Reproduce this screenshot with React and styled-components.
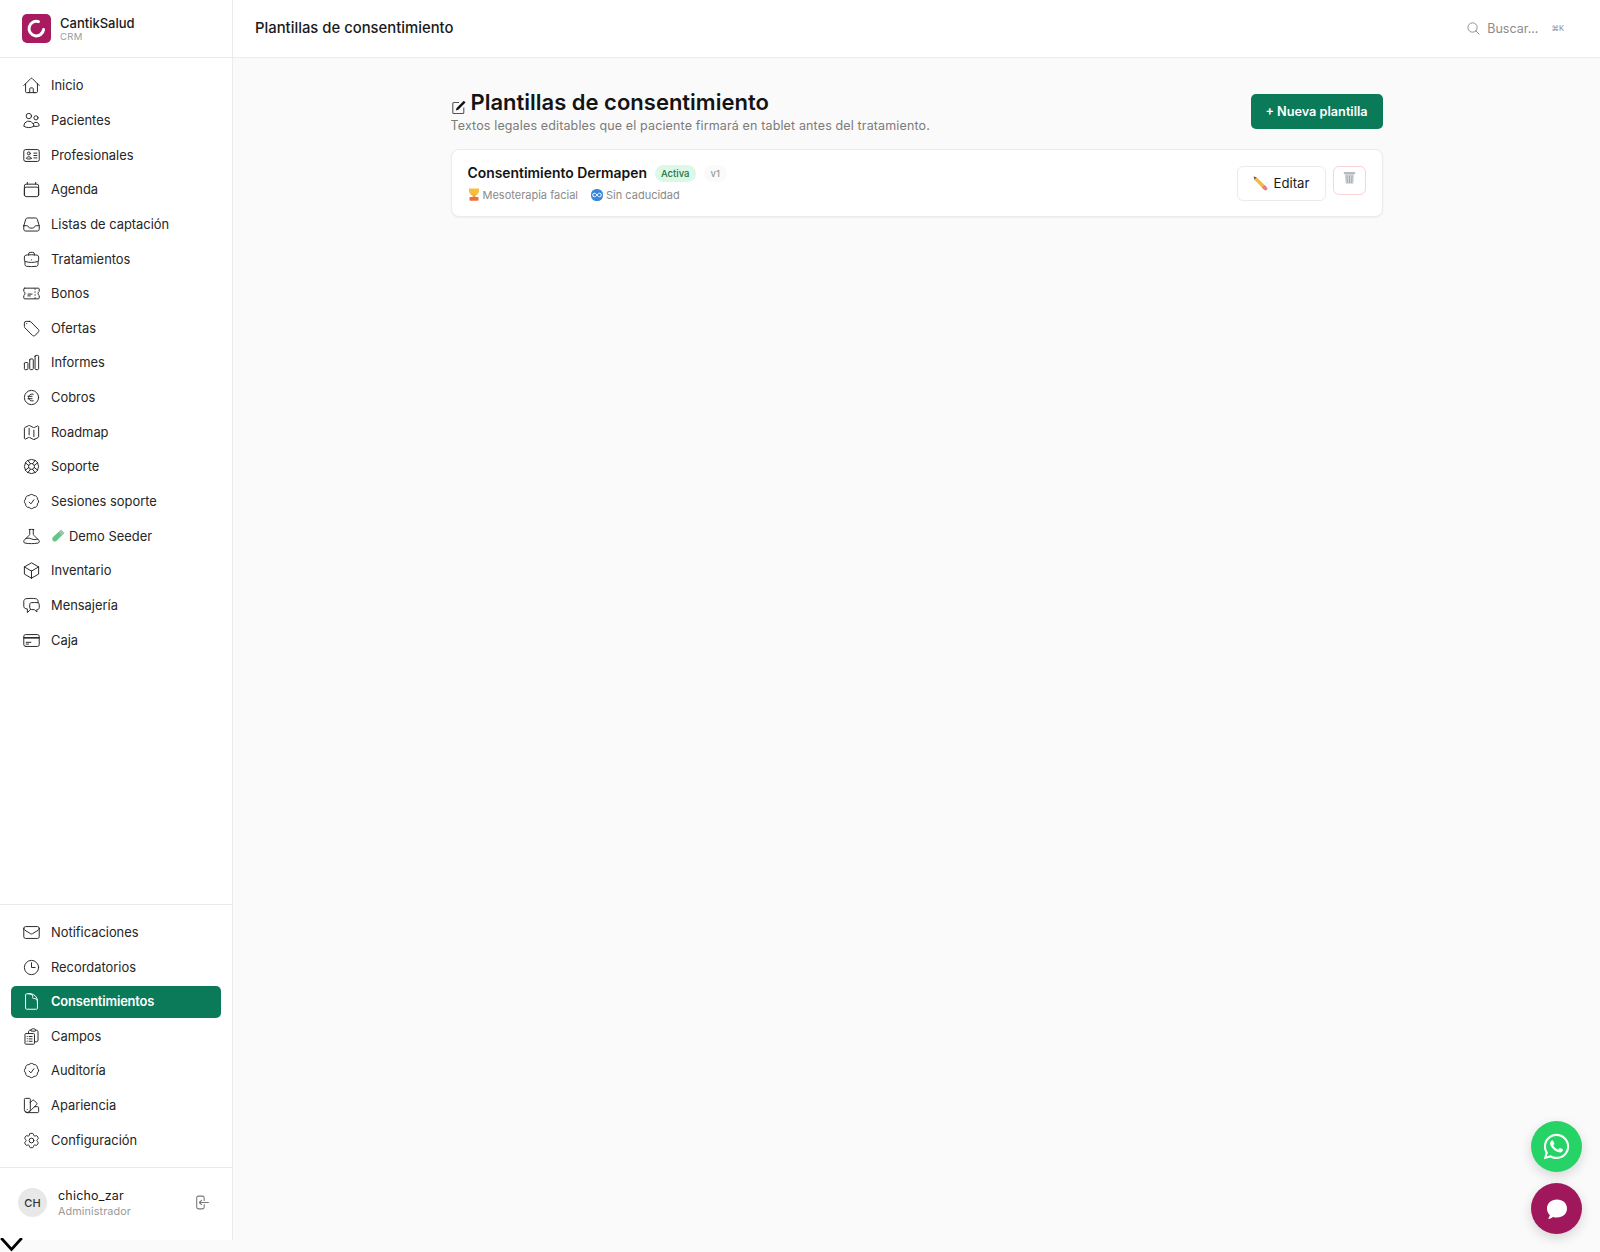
import React from "react";
import styled, { createGlobalStyle } from "styled-components";
import {
  HiOutlineHome,
  HiOutlineUsers,
  HiOutlineIdentification,
  HiOutlineCalendar,
  HiOutlineInbox,
  HiOutlineBriefcase,
  HiOutlineTicket,
  HiOutlineTag,
  HiOutlineChartBar,
  HiOutlineCurrencyEuro,
  HiOutlineMap,
  HiOutlineLifebuoy,
  HiOutlineCheckBadge,
  HiOutlineBeaker,
  HiOutlineCube,
  HiOutlineChatBubbleLeftRight,
  HiOutlineCreditCard,
  HiOutlineEnvelope,
  HiOutlineClock,
  HiOutlineDocument,
  HiOutlineClipboardDocumentList,
  HiOutlineSwatch,
  HiOutlineCog6Tooth,
  HiOutlineArrowLeftOnRectangle,
  HiOutlineMagnifyingGlass,
} from "react-icons/hi2";
import { FaWhatsapp } from "react-icons/fa";

const GlobalStyle = createGlobalStyle`
  html, body {
    margin: 0;
    padding: 0;
    background: #fafafa;
    font-family: Inter, "Liberation Sans", sans-serif;
    color: #1a1a1a;
    overflow: hidden;
  }
  * { box-sizing: border-box; }
`;

const mainItems = [
  ["Inicio", HiOutlineHome],
  ["Pacientes", HiOutlineUsers],
  ["Profesionales", HiOutlineIdentification],
  ["Agenda", HiOutlineCalendar],
  ["Listas de captación", HiOutlineInbox],
  ["Tratamientos", HiOutlineBriefcase],
  ["Bonos", HiOutlineTicket],
  ["Ofertas", HiOutlineTag],
  ["Informes", HiOutlineChartBar],
  ["Cobros", HiOutlineCurrencyEuro],
  ["Roadmap", HiOutlineMap],
  ["Soporte", HiOutlineLifebuoy],
  ["Sesiones soporte", HiOutlineCheckBadge],
  ["Demo Seeder", HiOutlineBeaker, true],
  ["Inventario", HiOutlineCube],
  ["Mensajería", HiOutlineChatBubbleLeftRight],
  ["Caja", HiOutlineCreditCard],
];

const bottomItems = [
  ["Notificaciones", HiOutlineEnvelope],
  ["Recordatorios", HiOutlineClock],
  ["Consentimientos", HiOutlineDocument],
  ["Campos", HiOutlineClipboardDocumentList],
  ["Auditoría", HiOutlineCheckBadge],
  ["Apariencia", HiOutlineSwatch],
  ["Configuración", HiOutlineCog6Tooth],
];

const TubeEmoji = () => (
  <svg width="14" height="14" viewBox="0 0 14 14">
    <path d="M10 .8 13.300 4.100 5.400 12a2.700 2.700 0 0 1-3.700-3.800z" fill="#63c686" />
    <path d="M10 .8 13.300 4.100 11 6.400 7.700 3.100z" fill="#aebfba" />
  </svg>
);

const MedalEmoji = () => (
  <svg width="12" height="13" viewBox="0 0 12 13">
    <path d="M1 .5h10v2.500a5 4.500 0 0 1-10 0z" fill="#f6bd3f" />
    <rect x="4.500" y="6.500" width="3" height="3" fill="#f4a93a" />
    <rect x="1.500" y="9" width="9" height="3.800" rx="0.800" fill="#ee6f3c" />
  </svg>
);

const InfinityEmoji = () => (
  <svg width="12" height="12" viewBox="0 0 12 12">
    <rect width="12" height="12" rx="5.500" fill="#3a86d8" />
    <path
      d="M6 6C5 4.600 4.300 4.200 3.500 4.200a1.800 1.800 0 0 0 0 3.600C4.300 7.800 5 7.400 6 6s1.700-1.800 2.500-1.800a1.800 1.800 0 0 1 0 3.600C7.700 7.800 7 7.400 6 6z"
      fill="none"
      stroke="#fff"
      strokeWidth="1"
    />
  </svg>
);

const PencilEmoji = () => (
  <svg width="15" height="15" viewBox="0 0 15 15">
    <path d="M3.600 1.200 13.400 10.800 10.800 13.400 1.200 3.600z" fill="#f7b93e" />
    <path d="M11.500 8.900 13.800 11.200a1.800 1.800 0 0 1-2.600 2.600L8.900 11.500z" fill="#ea7b8a" />
    <path d="M.6.600 3.700 1.300 1.300 3.700z" fill="#6b5a4a" />
  </svg>
);

const TrashEmoji = () => (
  <svg width="13" height="14" viewBox="0 0 13 14">
    <rect x="0.800" y="1" width="11.400" height="2" rx="0.500" fill="#b4bbbf" />
    <path d="M1.800 3h9.400l-.9 9.800H2.700z" fill="#ced3d6" />
    <path d="M4 4.500l.3 7.500M6.500 4.500V12M9 4.500l-.3 7.500" stroke="#99a2a7" strokeWidth="0.800" />
  </svg>
);

const PageIcon = () => (
  <svg width="16" height="16" viewBox="0 0 16 16" fill="none">
    <path d="M8 3.500H2.800a1 1 0 0 0-1 1v9a1 1 0 0 0 1 1h9a1 1 0 0 0 1-1V8.500" stroke="#555" strokeWidth="1.100" />
    <path d="M12.800 1.800 14.500 3.500 7.300 10.700 4.800 11.500 5.600 9z" fill="#111" />
  </svg>
);

const Shell = styled.div`
  display: flex;
  height: 1240px;
`;

const Sidebar = styled.aside`
  width: 233px;
  flex: none;
  display: flex;
  flex-direction: column;
  background: #fff;
  border-right: 1px solid #ebebeb;
`;

const Brand = styled.div`
  height: 58px;
  flex: none;
  display: flex;
  align-items: center;
  gap: 9px;
  padding: 0 22px;
  border-bottom: 1px solid #ebebeb;
`;

const LogoBox = styled.div`
  width: 29px;
  height: 29px;
  border-radius: 5px;
  background: #a81b5e;
  display: flex;
  align-items: center;
  justify-content: center;
`;

const BrandText = styled.div`
  display: flex;
  flex-direction: column;
  padding-top: 2px;
`;

const BrandName = styled.span`
  font-size: 13px;
  font-weight: 500;
  line-height: 15px;
`;

const BrandSub = styled.span`
  font-size: 9.500px;
  color: #9a9a9a;
  line-height: 12px;
  letter-spacing: 0.3px;
`;

const Nav = styled.nav`
  display: flex;
  flex-direction: column;
  gap: ${(p) => (p.$bottom ? "2.600px" : "2.650px")};
  padding: ${(p) => (p.$bottom ? "11px 11px 11px" : "11.800px 11px 0")};
  ${(p) => p.$bottom && "margin-top: auto; border-top: 1px solid #ebebeb;"}
`;

const NavRow = styled.a`
  height: 32px;
  display: flex;
  align-items: center;
  gap: 10px;
  padding-left: 11px;
  border-radius: 5px;
  font-size: 12.900px;
  font-weight: ${(p) => (p.$active ? 600 : 400)};
  letter-spacing: ${(p) => (p.$active ? "-0.16px" : "0")};
  color: ${(p) => (p.$active ? "#fff" : "#262626")};
  background: ${(p) => (p.$active ? "#0b7a59" : "transparent")};

  svg.nav-icon {
    flex: none;
    width: 19px;
    height: 19px;
    stroke-width: 1.250;
    color: ${(p) => (p.$active ? "#fff" : "#2a2a2a")};
  }
`;

const RowLabel = styled.span`
  display: flex;
  align-items: center;
  gap: 4px;
`;

const UserBox = styled.div`
  display: flex;
  align-items: flex-start;
  padding: 20px 18px 0;
  border-top: 1px solid #ebebeb;
  height: 73px;
`;

const Avatar = styled.div`
  width: 29px;
  height: 29px;
  border-radius: 50%;
  background: #e8e8e8;
  display: flex;
  align-items: center;
  justify-content: center;
  font-size: 11px;
  font-weight: 500;
  color: #333;
`;

const UserText = styled.div`
  flex: 1;
  margin-left: 11px;
  display: flex;
  flex-direction: column;
`;

const UserName = styled.span`
  font-size: 12.500px;
  line-height: 15px;
  letter-spacing: 0.2px;
`;

const UserRole = styled.span`
  margin-top: 1px;
  font-size: 10.800px;
  line-height: 15px;
  color: #9a9a9a;
  letter-spacing: 0.1px;
`;

const LogoutBtn = styled.span`
  display: flex;
  margin: 6px 4px 0 0;
  color: #777;
  font-size: 17px;
`;

const Main = styled.main`
  flex: 1;
  min-width: 0;
  display: flex;
  flex-direction: column;
`;

const TopBar = styled.header`
  height: 58px;
  flex: none;
  display: flex;
  align-items: center;
  justify-content: space-between;
  padding: 0 36px 2px 22px;
  background: #fff;
  border-bottom: 1px solid #ebebeb;
`;

const TopTitle = styled.h1`
  margin: 0;
  font-size: 14.850px;
  font-weight: 500;
`;

const SearchBox = styled.div`
  display: flex;
  align-items: center;
  margin-top: 2px;
  color: #8c8c8c;
  font-size: 12.500px;

  svg {
    width: 15px;
    height: 15px;
    margin-right: 6px;
  }
`;

const Kbd = styled.span`
  font-size: 7.500px;
  margin-left: 13px;
`;

const Content = styled.div`
  width: 932px;
  margin: 0 auto;
  padding-top: 31px;
`;

const PageHead = styled.div`
  display: flex;
  justify-content: space-between;
  align-items: center;
  margin-bottom: 15px;
`;

const TitleLine = styled.h2`
  margin: 0;
  display: flex;
  align-items: flex-end;
  gap: 4px;
  font-size: 22px;
  line-height: 27px;
  font-weight: 600;
  color: #141414;

  svg {
    margin-bottom: 1px;
  }
`;

const Subtitle = styled.p`
  margin: 2px 0 0;
  font-size: 12.500px;
  line-height: 16px;
  letter-spacing: 0.14px;
  color: #7b7b7b;
`;

const PrimaryButton = styled.button`
  width: 132px;
  height: 35px;
  border: 0;
  border-radius: 5px;
  background: #0b7a59;
  color: #fff;
  font: 600 12.700px Inter, sans-serif;
`;

const Card = styled.div`
  height: 68px;
  display: flex;
  align-items: center;
  justify-content: space-between;
  padding: 0 16px;
  background: #fff;
  border: 1px solid #ebebeb;
  border-radius: 8px;
  box-shadow: 0 1px 2px rgba(0, 0, 0, 0.05);
`;

const CardRow = styled.div`
  display: flex;
  align-items: center;
`;

const CardName = styled.span`
  font-size: 13.900px;
  font-weight: 600;
  color: #141414;
`;

const Pill = styled.span`
  margin-left: 8px;
  height: 17px;
  padding: 0 ${(p) => (p.$green ? 6 : 7)}px;
  border-radius: 9px;
  font-size: 9.500px;
  line-height: 17px;
  font-weight: 500;
  background: ${(p) => (p.$green ? "#dcf8e7" : "#fafafa")};
  color: ${(p) => (p.$green ? "#1b7047" : "#9a9a9a")};
`;

const Meta = styled.div`
  display: flex;
  align-items: center;
  margin-top: 6px;
  font-size: 11px;
  color: #8a8a8a;
`;

const MetaItem = styled.span`
  display: flex;
  align-items: center;
  gap: 3px;
  margin-right: 13px;
`;

const Actions = styled.div`
  display: flex;
  align-items: flex-start;
  gap: 7px;
`;

const EditButton = styled.button`
  width: 89px;
  height: 35px;
  display: flex;
  align-items: center;
  justify-content: center;
  gap: 6px;
  background: #fff;
  border: 1px solid #ebebeb;
  border-radius: 6px;
  font: 400 13.200px Inter, sans-serif;
  color: #1a1a1a;
`;

const TrashButton = styled.button`
  width: 33px;
  height: 29px;
  display: flex;
  align-items: center;
  justify-content: center;
  padding: 0 0 4px;
  background: #fff;
  border: 1px solid #f8d4d4;
  border-radius: 6px;
`;

const Fab = styled.button`
  position: fixed;
  right: 18px;
  bottom: ${(p) => p.$bottom}px;
  width: 51px;
  height: 51px;
  border: 0;
  border-radius: 50%;
  display: flex;
  align-items: center;
  justify-content: center;
  color: #fff;
  background: ${(p) => p.$bg};
  box-shadow: 0 4px 12px rgba(0, 0, 0, 0.15);
`;

const Chevron = styled.svg`
  display: block;
  width: 24px;
  height: 14px;
  margin-top: -2px;
`;

const NavItem = ({ label, icon: Icon, emoji, active }) => (
  <NavRow $active={active}>
    <Icon className="nav-icon" />
    <RowLabel>
      {emoji && <TubeEmoji />}
      {label}
    </RowLabel>
  </NavRow>
);

export default function App() {
  return (
    <>
      <GlobalStyle />
      <Shell>
        <Sidebar>
          <Brand>
            <LogoBox>
              <svg width="23" height="23" viewBox="0 0 23 23" fill="none">
                <path
                  d="M13.500 4.600A7.300 7.300 0 1 0 18.600 12.500"
                  stroke="#fff"
                  strokeWidth="3"
                  strokeLinecap="round"
                />
              </svg>
            </LogoBox>
            <BrandText>
              <BrandName>CantikSalud</BrandName>
              <BrandSub>CRM</BrandSub>
            </BrandText>
          </Brand>
          <Nav>
            {mainItems.map(([label, icon, emoji]) => (
              <NavItem key={label} label={label} icon={icon} emoji={emoji} />
            ))}
          </Nav>
          <Nav $bottom>
            {bottomItems.map(([label, icon]) => (
              <NavItem
                key={label}
                label={label}
                icon={icon}
                active={label === "Consentimientos"}
              />
            ))}
          </Nav>
          <UserBox>
            <Avatar>CH</Avatar>
            <UserText>
              <UserName>chicho_zar</UserName>
              <UserRole>Administrador</UserRole>
            </UserText>
            <LogoutBtn>
              <HiOutlineArrowLeftOnRectangle />
            </LogoutBtn>
          </UserBox>
        </Sidebar>
        <Main>
          <TopBar>
            <TopTitle>Plantillas de consentimiento</TopTitle>
            <SearchBox>
              <HiOutlineMagnifyingGlass />
              Buscar...
              <Kbd>⌘K</Kbd>
            </SearchBox>
          </TopBar>
          <Content>
            <PageHead>
              <div>
                <TitleLine>
                  <PageIcon />
                  Plantillas de consentimiento
                </TitleLine>
                <Subtitle>
                  Textos legales editables que el paciente firmará en tablet
                  antes del tratamiento.
                </Subtitle>
              </div>
              <PrimaryButton>+ Nueva plantilla</PrimaryButton>
            </PageHead>
            <Card>
              <div>
                <CardRow>
                  <CardName>Consentimiento Dermapen</CardName>
                  <Pill $green>Activa</Pill>
                  <Pill>v1</Pill>
                </CardRow>
                <Meta>
                  <MetaItem>
                    <MedalEmoji />
                    Mesoterapia facial
                  </MetaItem>
                  <MetaItem>
                    <InfinityEmoji />
                    Sin caducidad
                  </MetaItem>
                </Meta>
              </div>
              <Actions>
                <EditButton>
                  <PencilEmoji />
                  Editar
                </EditButton>
                <TrashButton>
                  <TrashEmoji />
                </TrashButton>
              </Actions>
            </Card>
          </Content>
        </Main>
      </Shell>
      <Chevron viewBox="0 0 24 14" fill="none">
        <path d="M1.200 0 11.500 11.500 21.800 0" stroke="#000" strokeWidth="2.800" />
      </Chevron>
      <Fab $bottom={80} $bg="#25d366">
        <FaWhatsapp size={29} />
      </Fab>
      <Fab $bottom={18} $bg="#a0175c">
        <svg width="24" height="24" viewBox="0 0 24 24" fill="#fff">
          <path d="M12 2.500c5.800 0 10 3.800 10 9s-4.200 9-10 9c-1.400 0-2.700-.2-3.900-.6-1 .8-2.700 1.700-5.100 1.900.9-1 1.600-2.300 1.800-3.700C3.100 16.400 2 14.100 2 11.500c0-5.200 4.200-9 10-9z" />
        </svg>
      </Fab>
    </>
  );
}
